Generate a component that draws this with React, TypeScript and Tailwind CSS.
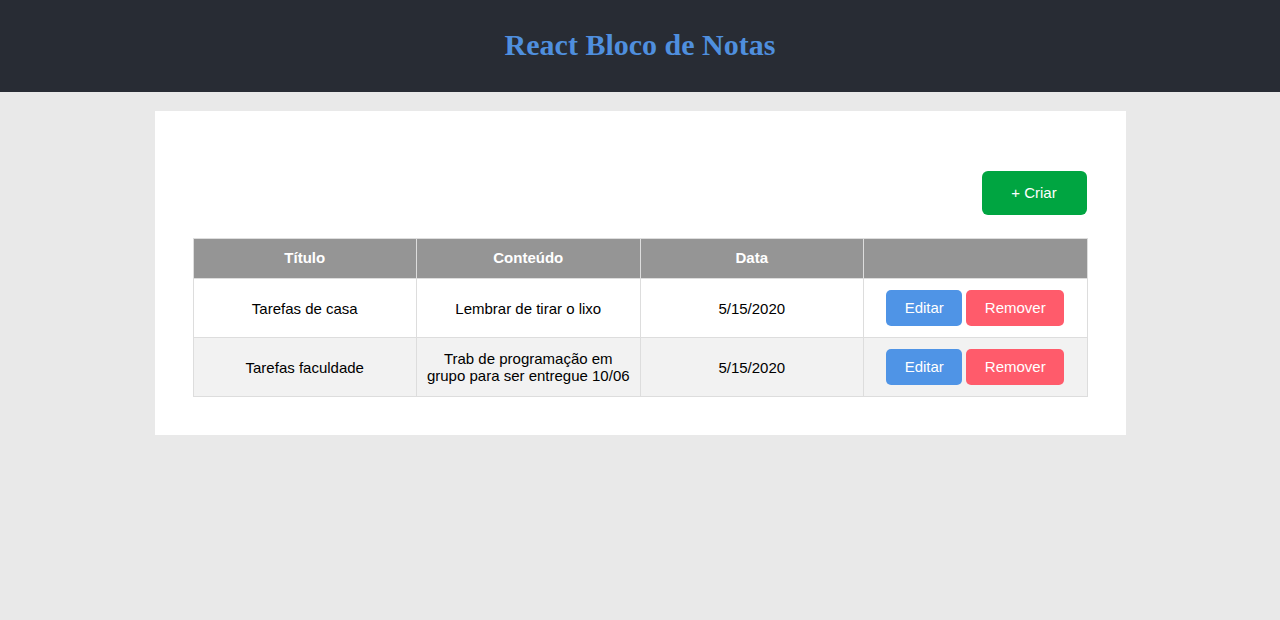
const notas = [
  { titulo: "Tarefas de casa", conteudo: "Lembrar de tirar o lixo", data: "5/15/2020" },
  {
    titulo: "Tarefas faculdade",
    conteudo: "Trab de programação em grupo para ser entregue 10/06",
    data: "5/15/2020",
  },
];

export default function App() {
  return (
    <div className="min-h-[620px] bg-[#e9e9e9] font-['Liberation_Sans',Arial,sans-serif] text-black">
      <header className="h-[92px] bg-[#282c34] flex items-center justify-center pb-[4px]">
        <h1 className="font-['Liberation_Serif','Times_New_Roman',serif] font-bold text-[30px] text-[#4f8fde]">
          React Bloco de Notas
        </h1>
      </header>

      <main className="w-[971px] mx-auto mt-[19px] bg-white px-[38px] pt-[60px] pb-[38px]">
        <div className="flex justify-end mb-[23px]">
          <button className="w-[105px] h-[44px] mr-px rounded-[6px] bg-[#00a541] text-white text-[15px]">
            + Criar
          </button>
        </div>

        <table className="w-full table-fixed border-collapse border border-[#dddddd] text-[15px]">
          <thead>
            <tr className="bg-[#959595] text-white font-bold text-[15px]">
              <th className="h-[40px] border border-[#dddddd]">Título</th>
              <th className="h-[40px] border border-[#dddddd]">Conteúdo</th>
              <th className="h-[40px] border border-[#dddddd]">Data</th>
              <th className="h-[40px] border border-[#dddddd]"></th>
            </tr>
          </thead>
          <tbody>
            {notas.map((n, i) => (
              <tr key={i} className={i % 2 === 1 ? "bg-[#f2f2f2]" : "bg-white"}>
                <td className="h-[59px] border border-[#dddddd] px-2 text-center leading-[17px]">{n.titulo}</td>
                <td className="h-[59px] border border-[#dddddd] px-2 text-center leading-[17px]">{n.conteudo}</td>
                <td className="h-[59px] border border-[#dddddd] px-2 text-center leading-[17px]">{n.data}</td>
                <td className="h-[59px] border border-[#dddddd] px-2">
                  <div className="flex justify-center gap-1">
                    <button className="w-[76px] h-[36px] rounded-[5px] bg-[#4f94e6] text-white">Editar</button>
                    <button className="w-[98px] h-[36px] rounded-[5px] bg-[#ff5b6b] text-white">Remover</button>
                  </div>
                </td>
              </tr>
            ))}
          </tbody>
        </table>
      </main>
    </div>
  );
}
